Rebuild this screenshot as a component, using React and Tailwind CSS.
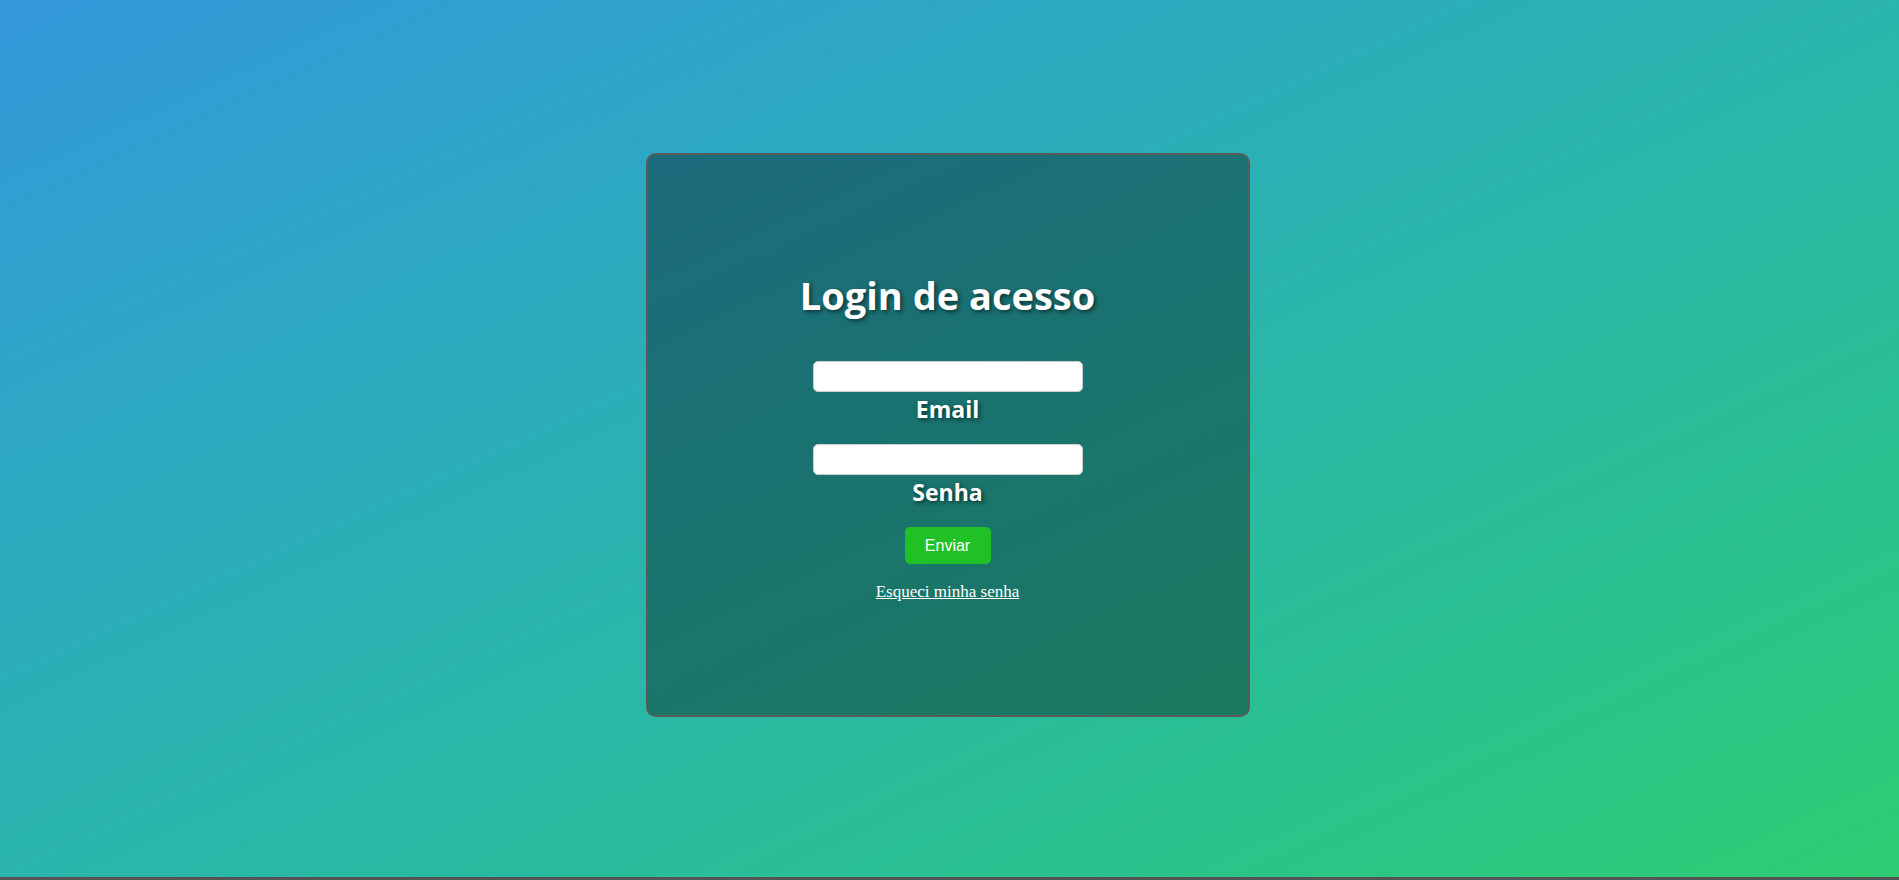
export default function App() {
  return (
    <div className="w-full h-[880px] bg-[#555555] overflow-hidden">
      <div className="h-[877px] w-full bg-linear-to-br from-[#3498db] to-[#2ecc71] flex justify-center pt-[153px] pr-[4px]">
        <div className="w-[604px] h-[564px] border-2 border-[#5a5a5a] rounded-[10px] bg-black/[0.36] flex flex-col items-center justify-start pt-[117px]">
          <h1 className="text-[38px] leading-[46px] font-bold text-white font-['Open_Sans','Lato',sans-serif] [text-shadow:2px_2px_4px_rgba(0,0,0,0.55)]">
            Login de acesso
          </h1>
          <input
            type="text"
            className="mt-[43px] w-[270px] h-[31px] bg-white rounded-[5px] border border-[#cccccc] outline-none"
          />
          <label className="mt-[3px] text-[23px] leading-[29px] font-bold text-white font-['Open_Sans','Lato',sans-serif] [text-shadow:2px_2px_4px_rgba(0,0,0,0.55)]">
            Email
          </label>
          <input
            type="password"
            className="mt-[20px] w-[270px] h-[31px] bg-white rounded-[5px] border border-[#cccccc] outline-none"
          />
          <label className="mt-[3px] text-[23px] leading-[29px] font-bold text-white font-['Open_Sans','Lato',sans-serif] [text-shadow:2px_2px_4px_rgba(0,0,0,0.55)]">
            Senha
          </label>
          <button className="mt-[20px] w-[86px] h-[37px] bg-[#20c125] rounded-[5px] text-white text-[16px] font-['Liberation_Sans',Arial,sans-serif]">
            Enviar
          </button>
          <a
            href="#"
            className="mt-[18px] text-white text-[17px] leading-[20px] underline font-['Liberation_Serif','Times_New_Roman',serif]"
          >
            Esqueci minha senha
          </a>
        </div>
      </div>
    </div>
  );
}
